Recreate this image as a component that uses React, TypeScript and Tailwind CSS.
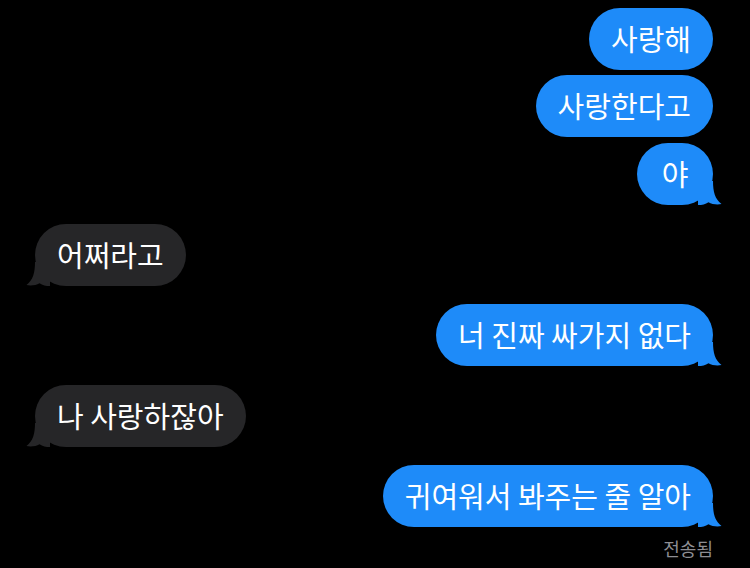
import React from "react";

type Msg = { text: string; me: boolean; tail: boolean; mt: number };

const msgs: Msg[] = [
  { text: "사랑해", me: true, tail: false, mt: 0 },
  { text: "사랑한다고", me: true, tail: false, mt: 5 },
  { text: "야", me: true, tail: true, mt: 6 },
  { text: "어쩌라고", me: false, tail: true, mt: 19 },
  { text: "너 진짜 싸가지 없다", me: true, tail: true, mt: 18 },
  { text: "나 사랑하잖아", me: false, tail: true, mt: 19 },
  { text: "귀여워서 봐주는 줄 알아", me: true, tail: true, mt: 18 },
];

function Tail({ me }: { me: boolean }) {
  const color = me ? "#1e8bf9" : "#262628";
  return (
    <svg
      width="24"
      height="24"
      viewBox="0 0 24 24"
      className={
        me
          ? "absolute right-[-9px] bottom-0"
          : "absolute left-[-9px] bottom-0 scale-x-[-1]"
      }
    >
      <path
        d="M0 0 H15 C15 11 17 18 23.5 23 C19 24 14 23.2 10.5 21.2 C7.5 23.2 4 24 0 24 Z"
        fill={color}
      />
    </svg>
  );
}

export default function App() {
  return (
    <div
      className="w-[750px] h-[568px] bg-black overflow-hidden flex flex-col pt-[8px] pl-[35px] pr-[37px]"
      style={{ fontFamily: '"Noto Sans CJK KR", "Noto Sans", sans-serif' }}
    >
      {msgs.map((m, i) => (
        <div
          key={i}
          className={`flex ${m.me ? "justify-end" : "justify-start"}`}
          style={{ marginTop: m.mt }}
        >
          <div
            className={`relative h-[62px] min-w-[76px] px-[22px] rounded-[31px] flex items-center justify-center text-white text-[29px] leading-none ${
              m.me ? "bg-[#1e8bf9]" : "bg-[#262628]"
            }`}
          >
            {m.tail && <Tail me={m.me} />}
            <span className="relative whitespace-pre pb-[2px]">{m.text}</span>
          </div>
        </div>
      ))}
      <div className="flex justify-end mt-[12px]">
        <span className="text-[18px] leading-none text-[#8e8e93]">전송됨</span>
      </div>
    </div>
  );
}
